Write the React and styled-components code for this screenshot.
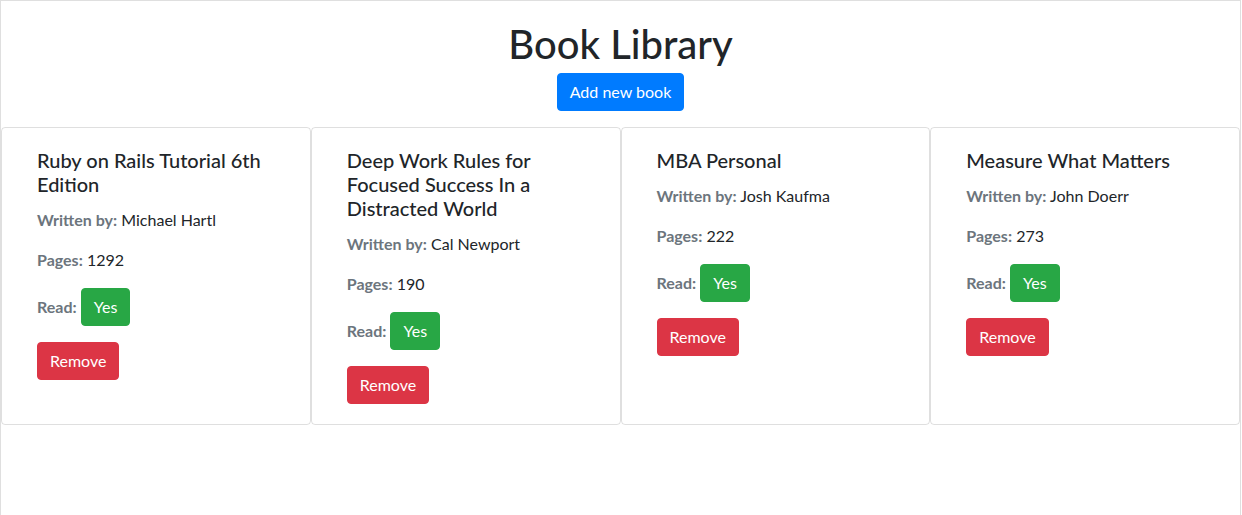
import React from 'react';
import styled, { createGlobalStyle } from 'styled-components';

const GlobalStyle = createGlobalStyle`
    * {
        box-sizing: border-box;
    }
    body {
        margin: 0;
        font-family: Lato, "Noto Sans", sans-serif;
        font-size: 16px;
        line-height: 1.5;
        color: #212529;
        background-color: #fff;
    }
`;

const books = [
    { id: 1, title: 'Ruby on Rails Tutorial 6th Edition', author: 'Michael Hartl', pages: 1292, read: true },
    { id: 2, title: 'Deep Work Rules for Focused Success In a Distracted World', author: 'Cal Newport', pages: 190, read: true },
    { id: 3, title: 'MBA Personal', author: 'Josh Kaufma', pages: 222, read: true },
    { id: 4, title: 'Measure What Matters', author: 'John Doerr', pages: 273, read: true },
];

const App = () => {
    return (
        <>
            <GlobalStyle />
            <Frame>
                <Header>
                    <h1>Book Library</h1>
                    <Button variant="primary">Add new book</Button>
                </Header>
                <CardRow>
                    {books.map((book) => (
                        <Card key={book.id}>
                            <CardBody>
                                <Title>{book.title}</Title>
                                <Field>
                                    <Label>Written by:</Label> {book.author}
                                </Field>
                                <Field>
                                    <Label>Pages:</Label> {book.pages}
                                </Field>
                                <Field>
                                    <Label>Read:</Label>{' '}
                                    <Button variant="success">{book.read ? 'Yes' : 'No'}</Button>
                                </Field>
                                <Button variant="danger">Remove</Button>
                            </CardBody>
                        </Card>
                    ))}
                </CardRow>
            </Frame>
        </>
    );
};

const colors = {
    primary: '#007bff',
    success: '#28a745',
    danger: '#dc3545',
};

const Frame = styled.div`
    width: 1241px;
    min-height: 100vh;
    border: 1px solid #dfdfdf;
    border-bottom: none;
`;

const Header = styled.header`
    display: flex;
    flex-direction: column;
    align-items: center;
    margin-bottom: 16px;

    h1 {
        margin: 19px 0 5px;
        font-size: 40px;
        font-weight: 500;
        line-height: 1.2;
    }
`;

const Button = styled.button`
    display: inline-block;
    font-family: inherit;
    font-size: 16px;
    line-height: 1.5;
    padding: 6px 12px;
    color: #fff;
    background-color: ${({ variant }) => colors[variant]};
    border: 1px solid ${({ variant }) => colors[variant]};
    border-radius: 4px;
    cursor: pointer;
`;

const CardRow = styled.div`
    display: grid;
    grid-template-columns: repeat(4, 1fr);
`;

const Card = styled.div`
    border: 1px solid rgba(0, 0, 0, 0.125);
    border-radius: 4px;
`;

const CardBody = styled.div`
    padding: 20px 35px 20px 35px;
`;

const Title = styled.h5`
    margin: 0 0 12px;
    font-size: 20px;
    font-weight: 500;
    line-height: 1.2;
`;

const Field = styled.p`
    margin: 0 0 16px;
`;

const Label = styled.strong`
    color: #6c757d;
    font-weight: 700;
`;

export default App;
